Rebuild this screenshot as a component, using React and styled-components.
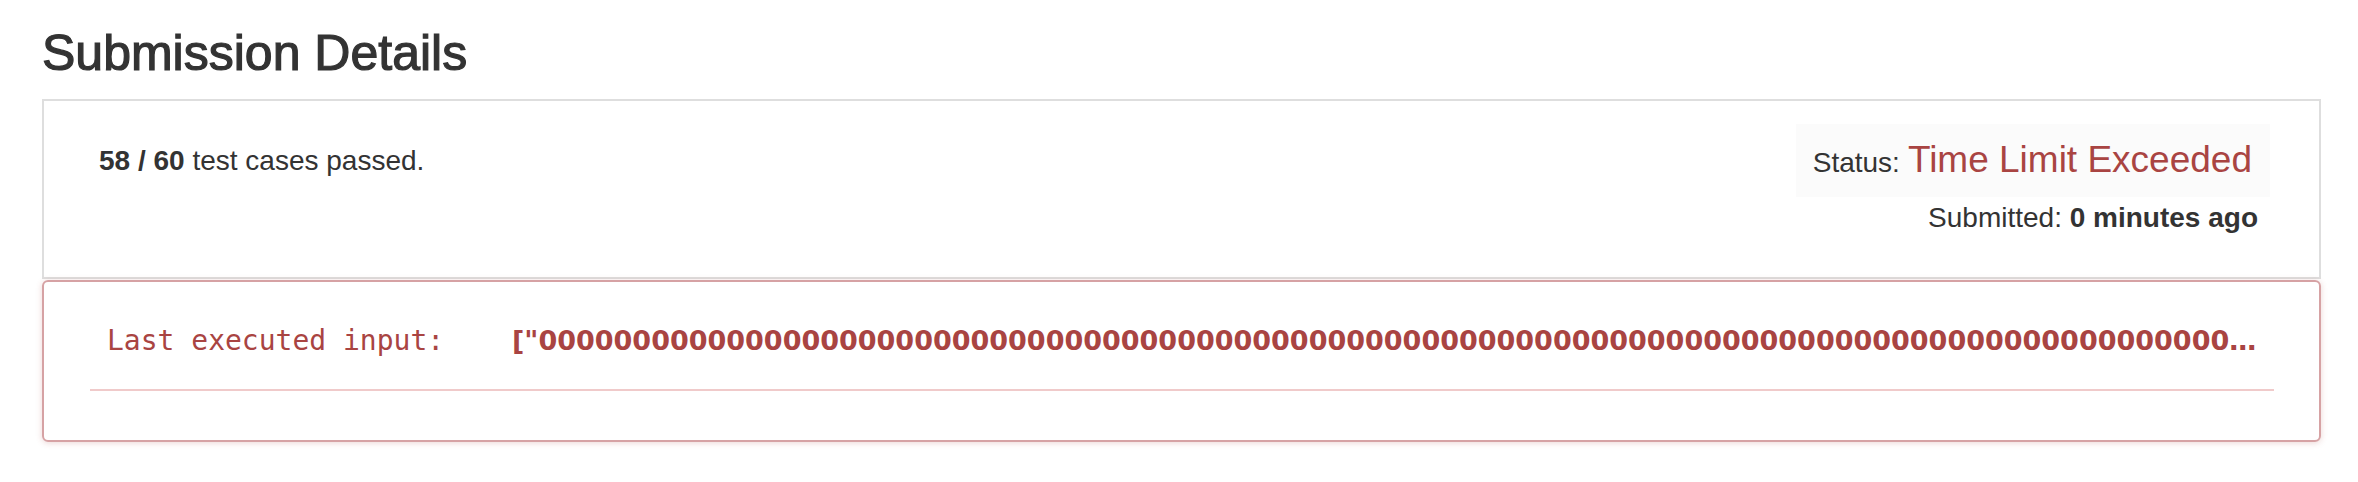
import styled, { createGlobalStyle } from "styled-components";

const GlobalStyle = createGlobalStyle`
  body {
    margin: 0;
    background: #fff;
    color: #333;
    font-family: "Liberation Sans", Arial, sans-serif;
  }
`;

const Page = styled.div`
  padding: 26px 37px 40px 42px;
`;

const Title = styled.h3`
  margin: 0 0 18px;
  font-size: 50px;
  font-weight: 500;
  line-height: 55px;
  color: #333;
  -webkit-text-stroke: 1.2px #333;
`;

const ResultPanel = styled.div`
  display: flex;
  justify-content: space-between;
  align-items: flex-start;
  border: 2px solid #dedede;
  padding: 23px 49px 39px 55px;
`;

const PassedText = styled.div`
  padding-top: 17px;
  font-size: 28px;
  line-height: 40px;
`;

const Strong = styled.strong`
  font-weight: 700;
`;

const StatusColumn = styled.div`
  display: flex;
  flex-direction: column;
  align-items: flex-end;
`;

const StatusBadge = styled.div`
  display: flex;
  align-items: baseline;
  gap: 8px;
  padding: 17px 18px 19px 17px;
  background: #fbfbfb;
  font-size: 28px;
  line-height: 1;
`;

const StatusValue = styled.span`
  font-size: 37px;
  color: #a94442;
`;

const Submitted = styled.div`
  margin-top: 1px;
  padding-right: 12px;
  font-size: 28px;
  line-height: 40px;
`;

const ErrorPanel = styled.div`
  margin-top: 1px;
  border: 2px solid #d6a2a4;
  border-radius: 6px;
  box-shadow: 0 1px 6px rgba(169, 68, 66, 0.22);
  padding: 39px 45px 49px 46px;
`;

const InputRow = styled.div`
  display: grid;
  grid-template-columns: 405px minmax(0, 1fr);
  align-items: baseline;
  padding: 0 6px 0 17px;
  color: #a94442;
  line-height: 40px;
`;

const InputLabel = styled.span`
  font-family: "DejaVu Sans Mono", "Liberation Mono", monospace;
  font-size: 28px;
`;

const InputValue = styled.span`
  font-family: "DejaVu Sans", "Liberation Sans", sans-serif;
  font-size: 27px;
  font-weight: 700;
  white-space: nowrap;
  overflow: hidden;
  text-overflow: ellipsis;
`;

const Divider = styled.hr`
  margin: 28px 0 0;
  border: 0;
  border-top: 2px solid #f0caca;
`;

const lastInput = '["' + "0".repeat(300) + '"]';

export default function App() {
  return (
    <>
      <GlobalStyle />
      <Page>
        <Title>Submission Details</Title>
        <ResultPanel>
          <PassedText>
            <Strong>58 / 60</Strong> test cases passed.
          </PassedText>
          <StatusColumn>
            <StatusBadge>
              <span>Status:</span>
              <StatusValue>Time Limit Exceeded</StatusValue>
            </StatusBadge>
            <Submitted>
              Submitted: <Strong>0 minutes ago</Strong>
            </Submitted>
          </StatusColumn>
        </ResultPanel>
        <ErrorPanel>
          <InputRow>
            <InputLabel>Last executed input:</InputLabel>
            <InputValue>{lastInput}</InputValue>
          </InputRow>
          <Divider />
        </ErrorPanel>
      </Page>
    </>
  );
}
